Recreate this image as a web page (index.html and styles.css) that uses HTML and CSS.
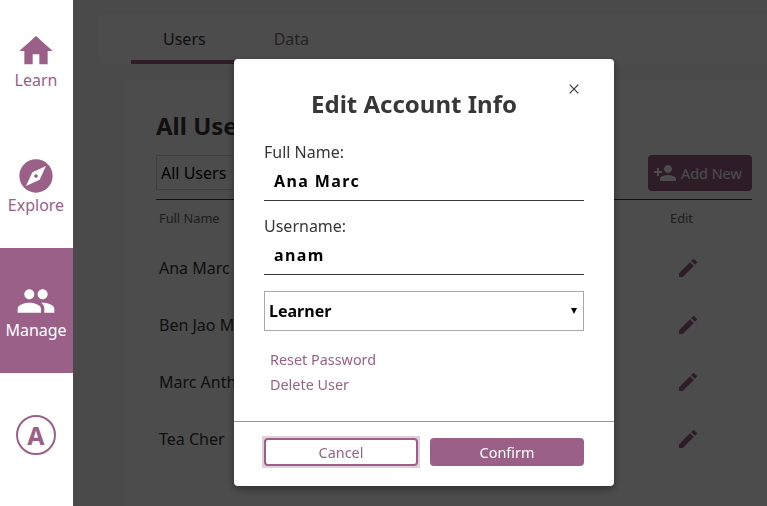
FILE: index.html
```html
<!DOCTYPE html>
<html lang="en">
<head>
<meta charset="utf-8">
<title>Manage Users</title>
<link rel="stylesheet" href="styles.css">
</head>
<body>
<svg width="0" height="0" class="sprite">
  <symbol id="pencil" viewBox="0 0 24 24"><path d="M3 17.25V21h3.75L17.81 9.94l-3.75-3.75L3 17.25zM20.71 7.04a1 1 0 0 0 0-1.41l-2.34-2.34a1 1 0 0 0-1.41 0l-1.83 1.83 3.75 3.75 1.83-1.83z"/></symbol>
</svg>
<div class="app">
  <nav class="sidebar">
    <a class="nav-item"><svg class="nav-icon" viewBox="0 0 24 24"><path d="M10 20v-6h4v6h5v-8h3L12 3 2 12h3v8z"/></svg><span>Learn</span></a>
    <a class="nav-item"><svg class="nav-icon" viewBox="0 0 24 24"><path d="M12 10.9c-.61 0-1.1.49-1.1 1.1s.49 1.1 1.1 1.1c.61 0 1.1-.49 1.1-1.1s-.49-1.1-1.1-1.1zM12 2C6.48 2 2 6.48 2 12s4.48 10 10 10 10-4.48 10-10S17.52 2 12 2zm2.19 12.19L6 18l3.81-8.19L18 6l-3.81 8.19z"/></svg><span>Explore</span></a>
    <a class="nav-item active"><svg class="nav-icon" viewBox="0 0 24 24"><path d="M16 11c1.66 0 2.99-1.34 2.99-3S17.66 5 16 5c-1.66 0-3 1.34-3 3s1.34 3 3 3zm-8 0c1.66 0 2.99-1.34 2.99-3S9.66 5 8 5C6.34 5 5 6.34 5 8s1.34 3 3 3zm0 2c-2.33 0-7 1.17-7 3.5V19h14v-2.5c0-2.33-4.67-3.5-7-3.5zm8 0c-.29 0-.62.02-.97.05 1.16.84 1.97 1.97 1.97 3.45V19h6v-2.5c0-2.33-4.67-3.5-7-3.5z"/></svg><span>Manage</span></a>
    <a class="nav-item profile"><span class="avatar">A</span></a>
  </nav>
  <main class="main">
    <div class="tabs"><a class="tab selected">Users</a><a class="tab">Data</a></div>
    <section class="panel">
      <h1 class="panel-title">All Users</h1>
      <div class="toolbar">
        <div class="filter">All Users</div>
        <button class="add-btn"><svg class="add-icon" viewBox="0 0 24 24"><path d="M15 12c2.21 0 4-1.79 4-4s-1.79-4-4-4-4 1.79-4 4 1.79 4 4 4zm-9-2V7H4v3H1v2h3v3h2v-3h3v-2H6zm9 4c-2.67 0-8 1.34-8 4v2h16v-2c0-2.66-5.33-4-8-4z"/></svg>Add New</button>
      </div>
      <div class="table">
        <div class="row head"><span>Full Name</span><span>Edit</span></div>
        <div class="row"><span>Ana Marc</span><svg class="edit"><use href="#pencil"/></svg></div>
        <div class="row"><span>Ben Jao Ming</span><svg class="edit"><use href="#pencil"/></svg></div>
        <div class="row"><span>Marc Anthony</span><svg class="edit"><use href="#pencil"/></svg></div>
        <div class="row"><span>Tea Cher</span><svg class="edit"><use href="#pencil"/></svg></div>
      </div>
    </section>
  </main>
</div>
<div class="overlay">
  <div class="modal">
    <svg class="close" viewBox="0 0 10 10"><path d="M.7.7l8.6 8.6M9.3.7L.7 9.3"/></svg>
    <div class="modal-body">
      <h2 class="modal-title">Edit Account Info</h2>
      <label class="label">Full Name:</label>
      <div class="input">Ana Marc</div>
      <label class="label">Username:</label>
      <div class="input">anam</div>
      <div class="role">Learner<svg class="caret" viewBox="0 0 6 6"><path d="M0 0h6L3 6z"/></svg></div>
      <div class="links"><a>Reset Password</a><a>Delete User</a></div>
    </div>
    <div class="modal-footer">
      <div class="focus"><button class="btn cancel">Cancel</button></div>
      <button class="btn confirm">Confirm</button>
    </div>
  </div>
</div>
</body>
</html>
```
FILE: styles.css
```css
* { box-sizing: border-box; }
body {
  margin: 0;
  height: 506px;
  overflow: hidden;
  font: 16px/22px "Noto Sans", sans-serif;
  color: #373737;
  background: #f7f7f7;
}
button { font-family: inherit; margin: 0; }
.sprite { position: absolute; }
.app { display: flex; height: 506px; overflow: hidden; }

.sidebar {
  flex: 0 0 73px;
  position: relative;
  z-index: 2;
  background: #fff;
  color: #9a6088;
}
.nav-item {
  display: flex;
  flex-direction: column;
  align-items: center;
  height: 125px;
  padding-top: 33px;
  padding-right: 1px;
}
.nav-item:first-child { height: 123px; padding-top: 31px; }
.nav-item.active { background: #9a6088; color: #fff; }
.nav-icon { width: 40px; height: 40px; fill: currentColor; margin-bottom: -2px; }
.profile { padding-top: 42px; }
.avatar {
  width: 40px;
  height: 40px;
  border: 2px solid #9a6088;
  border-radius: 50%;
  font-size: 25px;
  font-weight: 700;
  line-height: 36px;
  text-align: center;
}

.main { flex: 0 0 711px; height: 506px; padding: 14px 0 0 26px; }
.tabs {
  display: flex;
  gap: 4px;
  height: 50px;
  padding-left: 32px;
  background: #fdfdfd;
  border-radius: 3px;
}
.tab { padding: 14px 32px 0; color: #777; }
.tab.selected { color: #373737; border-bottom: 4px solid #9a6088; }
.panel {
  height: 426px;
  margin: 16px 0 0 25px;
  padding: 29px 32px 0;
  background: #fdfdfd;
}
.panel-title { margin: 0 0 13px; font-size: 24px; line-height: 33px; }
.toolbar { display: flex; justify-content: space-between; height: 36px; }
.filter {
  width: 180px;
  height: 35px;
  padding: 6px 4px;
  border: 1px solid #dacbd6;
  color: #000;
}
.add-btn {
  display: flex;
  align-items: center;
  gap: 4px;
  width: 104px;
  padding: 0 0 0 5px;
  border: 0;
  border-radius: 4px;
  background: #9a6088;
  color: #fff;
  font-size: 14.4px;
}
.add-icon { width: 24px; height: 24px; fill: currentColor; }
.table { margin-top: 8px; border-top: 1px solid #373737; }
.row {
  display: flex;
  justify-content: space-between;
  align-items: center;
  height: 57px;
  padding: 0 52px 0 3px;
}
.row.head { height: 39px; padding: 0 59px 3px 3px; font-size: 12.8px; color: #666; }
.edit { width: 24px; height: 24px; fill: #9a6088; }

.overlay {
  position: fixed;
  inset: 0 0 0 73px;
  z-index: 3;
  display: flex;
  background: rgba(0, 0, 0, .7);
}
.modal {
  position: relative;
  width: 380px;
  height: 427px;
  margin: 59px 0 0 161px;
  background: #fff;
  border-radius: 4px;
  box-shadow: 0 3px 8px rgba(0, 0, 0, .4);
}
.close {
  position: absolute;
  top: 24.5px;
  right: 35.5px;
  width: 10px;
  height: 10px;
  fill: none;
  stroke: #373737;
  stroke-width: 1.2;
}
.modal-body { height: 362px; padding: 28px 30px 0; }
.modal-title { margin: 0 20px 21px 0; font-size: 24px; line-height: 33px; text-align: center; }
.label { display: block; height: 22px; }
.input {
  height: 38px;
  margin-bottom: 14px;
  padding: 7px 10px;
  border-bottom: 1px solid #373737;
  color: #000;
  font-weight: 700;
  letter-spacing: 1.4px;
}
.role {
  display: flex;
  align-items: center;
  justify-content: space-between;
  height: 40px;
  margin-top: 16px;
  padding: 0 6px 0 4px;
  border: 1px solid #a9a9a9;
  color: #000;
  font-weight: 700;
}
.caret { width: 6px; height: 6px; }
.links {
  display: flex;
  flex-direction: column;
  padding: 16px 6px;
  color: #9a6088;
  font-size: 14.4px;
  line-height: 25px;
}
.modal-footer {
  display: flex;
  gap: 12px;
  padding: 16px 30px 0;
  border-top: 1px solid #979797;
}
.btn {
  display: block;
  width: 154px;
  height: 28px;
  padding: 1px 0 0;
  border: 2px solid #9a6088;
  border-radius: 4px;
  font-size: 14.4px;
  line-height: 22px;
}
.focus { height: 28px; background: #e1cfdc; box-shadow: 0 0 0 2px #e1cfdc; }
.cancel { background: #fff; color: #9a6088; }
.confirm { background: #9a6088; color: #fff; }
```
